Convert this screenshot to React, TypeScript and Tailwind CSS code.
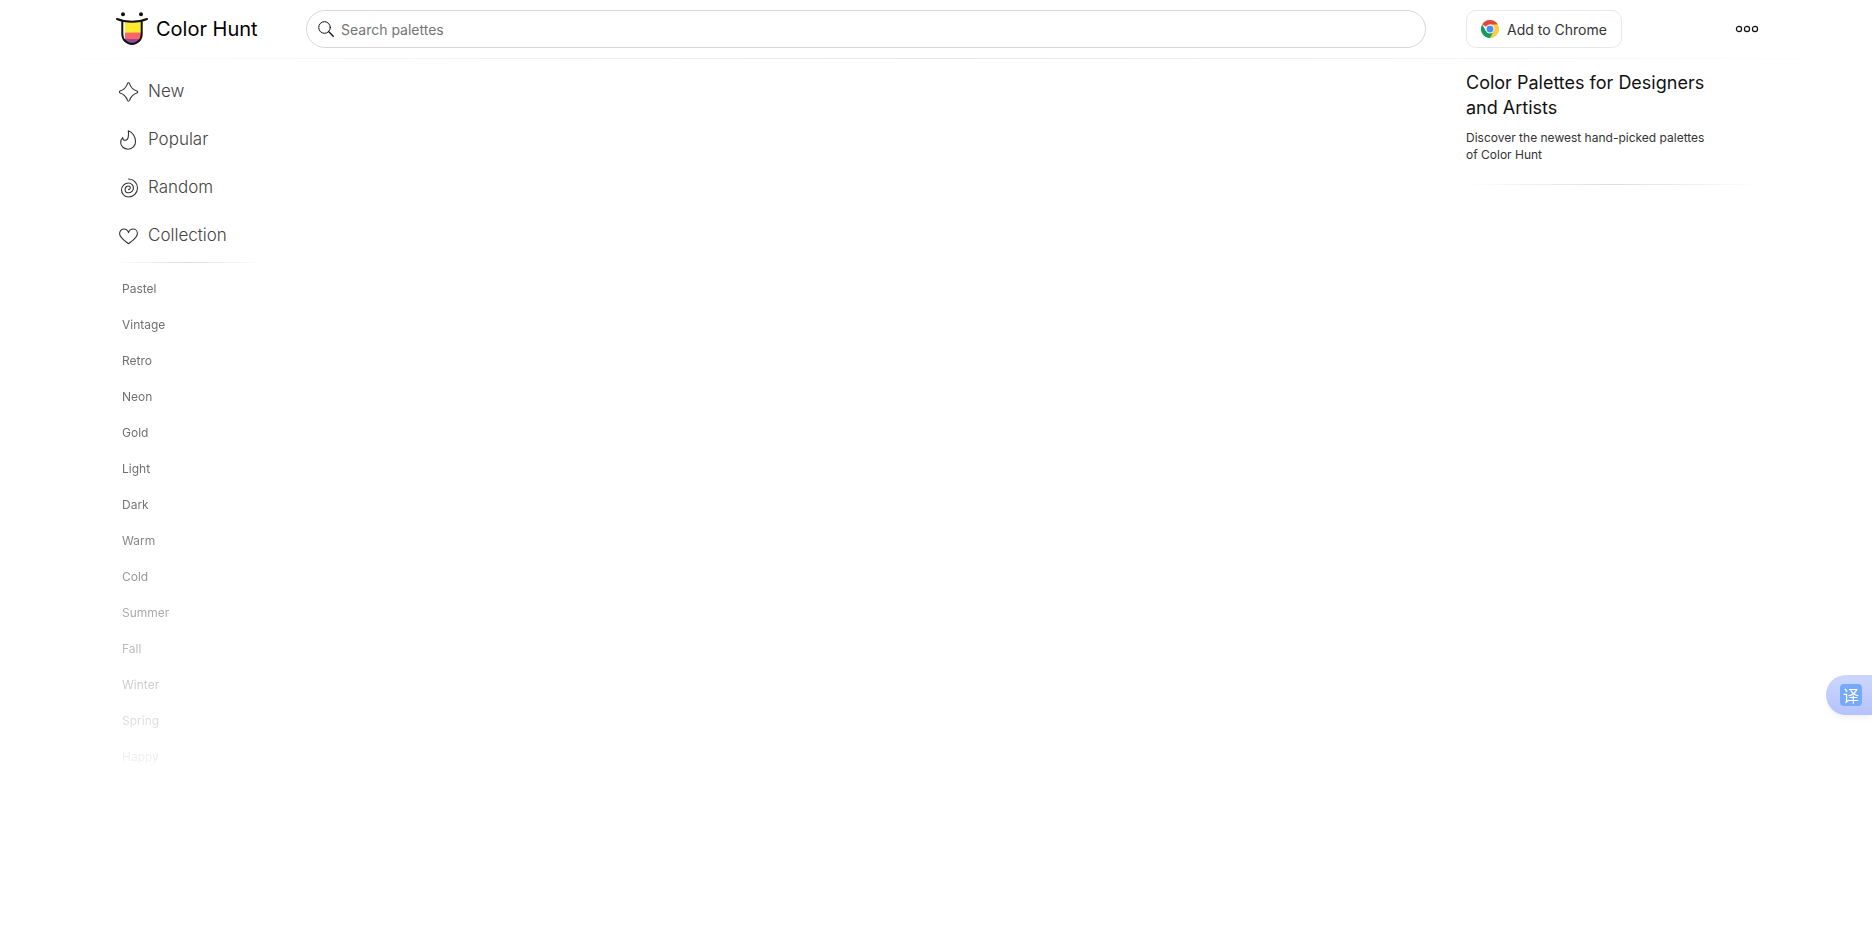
import type { ReactNode } from "react";

interface NavItem {
  label: string;
  icon: ReactNode;
}

const navItems: NavItem[] = [
  {
    label: "New",
    icon: (
      <path d="M9.500.8c.5 0 .8.3 1 .8 1.400 4.200 3.200 6 7.400 7.400.5.200.8.500.8 1s-.3.800-.8 1c-4.200 1.400-6 3.200-7.400 7.400-.2.500-.5.800-1 .8s-.8-.3-1-.8C7.100 14.200 5.300 12.400 1.100 11c-.5-.2-.8-.5-.8-1s.3-.8.8-1C5.300 7.600 7.100 5.800 8.500 1.600c.2-.5.5-.8 1-.8z" />
    ),
  },
  {
    label: "Popular",
    icon: (
      <path d="M9.300.8c4.600 1.600 7.200 6.200 7.200 10.600 0 4.500-3.100 7.800-7.300 7.800s-7.500-2.900-7.500-6.600c0-2 .8-3.700 2-4.900.1 1.400.9 2.600 2.200 2.600 1.700 0 2.900-1.200 3.300-3 .4-2 .5-4.200.1-6.500z" />
    ),
  },
  {
    label: "Random",
    icon: (
      <path d="M9.500 1a9 9 0 0 1 0 18 7 7 0 0 1 0-14 4.900 4.900 0 0 1 0 9.800 3.400 3.400 0 0 1 0-6.800 1.800 1.800 0 0 1 0 3.600" />
    ),
  },
  {
    label: "Collection",
    icon: (
      <path d="M9.500 17.700C7 15.700.6 12 .6 7.500.6 4.900 2.500 3 4.900 3c2 0 3.800 1.200 4.600 3.700C10.300 4.200 12.100 3 14.100 3c2.400 0 4.300 1.900 4.300 4.500 0 4.500-6.400 8.200-8.900 10.200z" />
    ),
  },
];

const tags = [
  "Pastel",
  "Vintage",
  "Retro",
  "Neon",
  "Gold",
  "Light",
  "Dark",
  "Warm",
  "Cold",
  "Summer",
  "Fall",
  "Winter",
  "Spring",
  "Happy",
];

function Logo() {
  return (
    <svg viewBox="0 0 32 34" className="h-[34px] w-8 shrink-0" aria-hidden="true">
      <clipPath id="tongue">
        <path d="M6.500 9.500h19V22a9.500 9.500 0 0 1-19 0z" />
      </clipPath>
      <g clipPath="url(#tongue)">
        <path fill="#fff" d="M6 8h20v26H6z" />
        <path fill="#ffec2e" d="M9 8h17v12H9z" />
        <path fill="#ffb648" d="M9 20h17v1H9z" />
        <path fill="#ff6464" d="M9 21h17v6H9z" />
        <path fill="#8f4a9b" d="M9 27h17v7H9z" />
      </g>
      <g fill="none" stroke="#111" strokeWidth="2" strokeLinecap="round">
        <path d="M6.300 9v13.200a9.700 9.700 0 0 0 19.400 0V9" />
        <path d="M1 7c8.500 3.600 21.500 3.600 30 0" />
      </g>
      <circle cx="7" cy="2.200" r="2" fill="#111" />
      <circle cx="25" cy="2.200" r="2" fill="#111" />
    </svg>
  );
}

function ChromeIcon() {
  return (
    <svg viewBox="0 0 48 48" className="size-[18px] shrink-0" aria-hidden="true">
      <path fill="#dd4b3e" d="M24 24 3.200 12a24 24 0 0 1 41.600 0z" />
      <path fill="#ffcd40" d="M24 24V12h20.800A24 24 0 0 1 24 48l10.400-18z" />
      <path fill="#0f9d58" d="M24 48A24 24 0 0 1 3.200 12l10.400 18L24 24l10.400 6z" />
      <circle cx="24" cy="24" r="12" fill="#f1f1f1" />
      <circle cx="24" cy="24" r="9" fill="#4c8bf5" />
    </svg>
  );
}

function Header() {
  return (
    <header>
      <div className="grid h-[58px] grid-cols-[194px_minmax(0,1fr)_294px] items-center px-28">
        <a href="#" className="flex items-center gap-2 pl-1 text-xl text-black">
          <Logo />
          <span>Color Hunt</span>
        </a>
        <form role="search" className="mr-10 flex h-[38px] items-center gap-[7px] rounded-full border border-[#d8d8d8] pl-[11px]">
          <svg
            viewBox="0 0 16 16"
            className="size-4 shrink-0"
            fill="none"
            stroke="#111"
            strokeLinecap="round"
            aria-hidden="true"
          >
            <circle cx="6.500" cy="6.500" r="5.800" />
            <path strokeWidth="1.300" d="m10.800 10.800 4.500 4.500" />
          </svg>
          <input
            type="text"
            aria-label="Search palettes"
            placeholder="Search palettes"
            className="h-full min-w-0 flex-1 bg-transparent text-sm outline-none placeholder:text-[#757575]"
          />
        </form>
        <div className="flex items-center justify-between">
          <button
            type="button"
            className="flex h-[38px] items-center gap-2 rounded-[10px] border border-[#e8e8e8] px-3.5 text-sm text-[#333]"
          >
            <ChromeIcon />
            <span className="pt-px">Add to Chrome</span>
          </button>
          <button type="button" aria-label="Menu" className="flex h-8 items-center pr-px">
            <svg viewBox="0 0 24 8" className="h-2 w-6" fill="none" stroke="#111" strokeWidth="1.200">
              <circle cx="4" cy="4" r="2.600" />
              <circle cx="12" cy="4" r="2.600" />
              <circle cx="20" cy="4" r="2.600" />
            </svg>
          </button>
        </div>
      </div>
      <div className="h-px bg-linear-to-r from-transparent via-[#e6e6e6] to-transparent" />
    </header>
  );
}

function Sidebar() {
  return (
    <aside className="pt-[9px]">
      <nav aria-label="Palettes">
        {navItems.map((item) => (
          <a
            key={item.label}
            href="#"
            className="flex h-12 items-center gap-[9px] pl-[7px] text-[17px] font-light text-[#444]"
          >
            <svg
              viewBox="0 0 20 20"
              className="size-5 shrink-0"
              fill="none"
              stroke="#333"
              strokeWidth="1.100"
              strokeLinecap="round"
              strokeLinejoin="round"
              aria-hidden="true"
            >
              {item.icon}
            </svg>
            {item.label}
          </a>
        ))}
      </nav>
      <div className="mt-0.5 h-px w-[152px] bg-linear-to-r from-transparent via-[#ddd] to-transparent" />
      <nav
        aria-label="Tags"
        className="pt-2 pb-4 [mask-image:linear-gradient(to_bottom,#000_230px,transparent_100%)]"
      >
        {tags.map((tag) => (
          <a key={tag} href="#" className="flex h-9 items-center pl-2.5 text-xs text-[#707070]">
            {tag}
          </a>
        ))}
      </nav>
    </aside>
  );
}

function About() {
  return (
    <aside className="pt-[11px]">
      <h1 className="max-w-[250px] text-lg leading-[25px] text-[#111]">
        Color Palettes for Designers and Artists
      </h1>
      <p className="mt-[9px] max-w-[250px] text-xs leading-[17px] text-[#333]">
        Discover the newest hand-picked palettes of Color Hunt
      </p>
      <div className="mt-[21px] h-px bg-linear-to-r from-transparent via-[#ddd] to-transparent" />
    </aside>
  );
}

export default function App() {
  return (
    <div className="min-h-screen bg-white font-['Inter',sans-serif]">
      <Header />
      <div className="grid grid-cols-[194px_minmax(0,1fr)_294px] px-28">
        <Sidebar />
        <main />
        <About />
      </div>
      <button
        type="button"
        aria-label="Translate"
        className="fixed right-0 bottom-[212px] flex h-10 w-[46px] items-center rounded-l-full bg-linear-to-b from-[#cbd6ff] to-[#b6c3fc] pl-3.5 shadow-md shadow-black/5"
      >
        <span className="flex size-[22px] items-center justify-center rounded bg-[#77a9fa] font-['Noto_Sans_CJK_SC',sans-serif] text-base leading-none text-white">
          译
        </span>
      </button>
    </div>
  );
}
